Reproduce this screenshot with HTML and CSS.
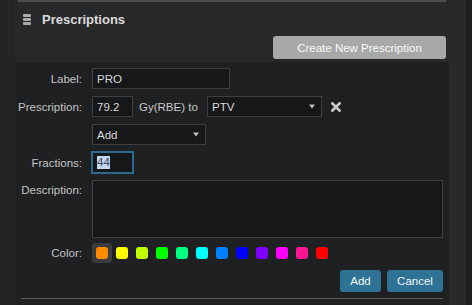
FILE: index.html
```html
<!DOCTYPE html>
<html>
<head>
<meta charset="utf-8">
<link rel="stylesheet" href="styles.css">
</head>
<body>
<div class="app">
  <div class="gutter"></div>
  <div class="main">
    <div class="topline"></div>
    <div class="header">
      <span class="bars"><i></i><i></i><i></i></span>
      <span class="title">Prescriptions</span>
    </div>
    <div class="actions">
      <button class="btn-create">Create New Prescription</button>
    </div>
    <div class="form">
      <div class="row r1">
        <label class="lbl">Label:</label>
        <div class="field w-label">PRO</div>
      </div>
      <div class="row r2">
        <label class="lbl">Prescription:</label>
        <div class="field w-dose">79.2</div>
        <span class="unit">Gy(RBE) to</span>
        <div class="field select w-target"><span>PTV</span><svg class="caret" width="6" height="5" viewBox="0 0 6 5"><path d="M0 0.5H6L3 4.5Z" fill="#bdbdbd"/></svg></div>
        <svg class="xicon" width="10" height="10" viewBox="0 0 10 10"><path d="M1.4 1.4L8.6 8.6M8.6 1.4L1.4 8.6" stroke="#c9c9c9" stroke-width="2.7" stroke-linecap="square"/></svg>
      </div>
      <div class="row r3">
        <span class="lbl"></span>
        <div class="field select w-add"><span>Add</span><svg class="caret" width="6" height="5" viewBox="0 0 6 5"><path d="M0 0.5H6L3 4.5Z" fill="#bdbdbd"/></svg></div>
      </div>
      <div class="row r4">
        <label class="lbl">Fractions:</label>
        <div class="field w-dose focus"><span class="sel">44</span></div>
      </div>
      <div class="row r5">
        <label class="lbl top">Description:</label>
        <div class="field area"></div>
      </div>
      <div class="row r6">
        <label class="lbl">Color:</label>
        <div class="swatches">
          <span class="sw on"><b style="background:#ff8c00"></b></span>
          <span class="sw"><b style="background:#ffff00"></b></span>
          <span class="sw"><b style="background:#bfff00"></b></span>
          <span class="sw"><b style="background:#00ff00"></b></span>
          <span class="sw"><b style="background:#00ff80"></b></span>
          <span class="sw"><b style="background:#00ffff"></b></span>
          <span class="sw"><b style="background:#0080ff"></b></span>
          <span class="sw"><b style="background:#0000ff"></b></span>
          <span class="sw"><b style="background:#8000ff"></b></span>
          <span class="sw"><b style="background:#ff00ff"></b></span>
          <span class="sw"><b style="background:#ff1493"></b></span>
          <span class="sw"><b style="background:#ff0000"></b></span>
        </div>
      </div>
      <div class="row r7">
        <button class="btn-blue add">Add</button>
        <button class="btn-blue cancel">Cancel</button>
      </div>
      <div class="rule"></div>
    </div>
  </div>
</div>
</body>
</html>
```

FILE: styles.css
```css
* { box-sizing: border-box; }
html, body { margin: 0; padding: 0; }
body {
  background: #1e1f21;
  font-family: "Liberation Sans", Arial, sans-serif;
  font-size: 11.5px;
  color: #c8c8c8;
  width: 472px;
  height: 305px;
  overflow: hidden;
}
.app {
  display: flex;
  width: 466px;
  height: 305px;
  background: #27282a;
}
.gutter {
  width: 15px;
  flex: none;
  background: #232426;
}
.main {
  flex: 1;
  display: flex;
  flex-direction: column;
}
.topline {
  margin-left: 3px;
  width: 428px;
  height: 2px;
  background: #4b4c4e;
}
.header {
  height: 34px;
  display: flex;
  align-items: center;
  padding-left: 8px;
}
.bars {
  display: flex;
  flex-direction: column;
  gap: 1.5px;
  width: 8px;
  margin-right: 11px;
  margin-top: 1px;
}
.bars i {
  display: block;
  height: 2.5px;
  background: #a9a9a9;
  border-radius: 1px;
}
.title {
  font-size: 13px;
  font-weight: bold;
  color: #dcdcdc;
}
.actions {
  display: flex;
  justify-content: flex-end;
  padding-right: 20px;
}
.btn-create {
  width: 173px;
  height: 23px;
  border: 0;
  border-radius: 3px;
  background: #a8a8a8;
  color: #fafafa;
  font-family: inherit;
  font-size: 11.5px;
  padding: 0;
}
.form {
  margin-top: 3px;
  width: 434px;
  flex: 1;
  background: #1f2022;
  padding: 6px 6px 0 0;
}
.row {
  display: flex;
  align-items: center;
}
.lbl {
  width: 67px;
  margin-right: 10px;
  text-align: right;
  color: #c4c4c4;
  flex: none;
}
.lbl.top { align-self: flex-start; padding-top: 4px; }
.r1, .r2, .r3, .r4 { height: 21px; margin-bottom: 7px; }
.r5 { margin-bottom: 5px; }
.r6 { height: 20px; margin-bottom: 7px; }
.r7 { height: 22px; margin-bottom: 6px; justify-content: flex-end; gap: 6px; }
.field {
  height: 21px;
  border: 1px solid #3f4042;
  background: #161719;
  color: #dadada;
  padding: 0 4px;
  display: flex;
  align-items: center;
  flex: none;
}
.w-label { width: 138px; }
.w-dose { width: 41px; }
.w-target { width: 115px; }
.w-add { width: 114px; }
.select { justify-content: space-between; padding-right: 6px; }
.caret { display: block; }
.unit {
  width: 74px;
  padding-left: 6px;
  color: #c8c8c8;
  flex: none;
}
.xicon { margin-left: 9px; display: block; }
.focus {
  border-color: #2b6a8c;
  box-shadow: 0 0 0 1px #2b6a8c;
}
.sel {
  background: #c3d7ee;
  color: #39475c;
  line-height: 13px;
}
.area {
  width: 351px;
  height: 58px;
}
.swatches { display: flex; }
.sw {
  width: 20px;
  height: 20px;
  display: flex;
  align-items: center;
  justify-content: center;
  border-radius: 3px;
}
.sw.on { background: #3a3b3d; }
.sw b {
  display: block;
  width: 12px;
  height: 12px;
  border-radius: 3px;
}
.btn-blue {
  height: 22px;
  border: 0;
  border-radius: 3px;
  background: #2e7296;
  color: #f4f4f4;
  font-family: inherit;
  font-size: 11.5px;
  padding: 0;
}
.add { width: 41px; }
.cancel { width: 56px; }
.rule {
  margin-left: 6px;
  height: 1px;
  background: #5a5b5d;
}
```
